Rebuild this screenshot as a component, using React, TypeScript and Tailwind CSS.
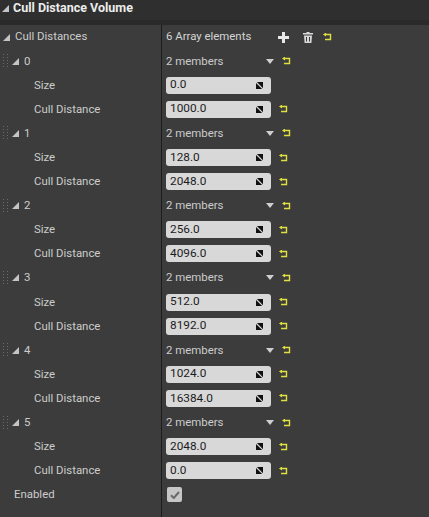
import React from 'react';

const elements = [
  { size: '0.0', dist: '1000.0', sizeReset: false, distReset: true },
  { size: '128.0', dist: '2048.0', sizeReset: true, distReset: true },
  { size: '256.0', dist: '4096.0', sizeReset: true, distReset: true },
  { size: '512.0', dist: '8192.0', sizeReset: true, distReset: true },
  { size: '1024.0', dist: '16384.0', sizeReset: true, distReset: true },
  { size: '2048.0', dist: '0.0', sizeReset: true, distReset: true },
];

function Expander() {
  return (
    <svg width="7" height="7" viewBox="0 0 7 7" className="shrink-0">
      <polygon points="7,0 7,7 0,7" fill="#c4c4c4" />
    </svg>
  );
}

function Grip() {
  return (
    <svg width="6" height="16" viewBox="0 0 6 16" className="shrink-0">
      {[1, 4, 7, 10, 13].map((y) => (
        <g key={y}>
          <rect x="0" y={y} width="1" height="1" fill="#6a6a6a" />
          <rect x="4" y={y} width="1" height="1" fill="#6a6a6a" />
        </g>
      ))}
    </svg>
  );
}

function ResetArrow() {
  return (
    <svg width="9" height="8" viewBox="0 0 9 8" className="shrink-0">
      <path d="M2.5 1.5 H7.5 V6.5 H2" stroke="#e0e040" strokeWidth="1.4" fill="none" />
      <polygon points="0,1.5 3,-0.5 3,3.5" fill="#e0e040" />
    </svg>
  );
}

function SpinIcon() {
  return (
    <svg width="7" height="7" viewBox="0 0 8 8" className="shrink-0">
      <polygon points="1,0 8,0 8,7" fill="#111" />
      <polygon points="0,1 0,8 7,8" fill="#111" />
    </svg>
  );
}

function NumberBox({ value }: { value: string }) {
  return (
    <div className="flex items-center justify-between w-[105px] h-[17px] rounded-[3px] bg-[#d8d8d8] pl-[4px] pr-[8px]">
      <span className="text-[11.8px] text-[#1c1c1c] leading-none">{value}</span>
      <SpinIcon />
    </div>
  );
}

function Row({ left, right }: { left: React.ReactNode; right: React.ReactNode }) {
  return (
    <div className="flex h-[24.1px]">
      <div className="w-[162px] shrink-0 border-r border-[#1c1c1c] flex items-center">{left}</div>
      <div className="flex-1 flex items-center pl-[4px]">{right}</div>
    </div>
  );
}

export default function App() {
  return (
    <div
      className="w-[429px] h-[517px] flex flex-col bg-[#3c3c3c] text-[#cccccc] text-[11.4px] overflow-hidden"
      style={{ fontFamily: 'Roboto, "Liberation Sans", sans-serif' }}
    >
      {/* Category header */}
      <div className="h-[25px] shrink-0 flex items-center gap-[4px] pl-[2px] pb-[4px] bg-[#2f2f2f] border-b-[5px] border-[#2a2a2a]">
        <Expander />
        <span className="text-[12.5px] font-bold text-[#ececec]">Cull Distance Volume</span>
      </div>

      <Row
        left={
          <div className="flex items-center gap-[5px] pl-[3px]">
            <Expander />
            <span>Cull Distances</span>
          </div>
        }
        right={
          <div className="flex items-center">
            <span className="text-[#d4d4d4]">6 Array elements</span>
            <svg width="11" height="11" viewBox="0 0 11 11" className="ml-[27px]">
              <rect x="4" y="0" width="3" height="11" fill="#e8e8e8" />
              <rect x="0" y="4" width="11" height="3" fill="#e8e8e8" />
            </svg>
            <svg width="10" height="11" viewBox="0 0 10 11" className="ml-[14px]">
              <rect x="0" y="1" width="10" height="1.5" fill="#d8d8d8" />
              <rect x="3.5" y="0" width="3" height="1.5" fill="#d8d8d8" />
              <path d="M1 3.5 H9 L8.4 11 H1.6 Z" fill="#d8d8d8" />
              <rect x="3" y="5" width="1" height="4.5" fill="#3c3c3c" />
              <rect x="6" y="5" width="1" height="4.5" fill="#3c3c3c" />
            </svg>
            <span className="ml-[10px] flex"><ResetArrow /></span>
          </div>
        }
      />

      {elements.map((el, i) => (
        <React.Fragment key={i}>
          <Row
            left={
              <div className="flex items-center pl-[3px]">
                <Grip />
                <span className="ml-[3px]"><Expander /></span>
                <span className="ml-[5px]">{i}</span>
              </div>
            }
            right={
              <div className="flex items-center">
                <span className="w-[100px]">2 members</span>
                <svg width="8" height="5" viewBox="0 0 8 5" className="shrink-0">
                  <polygon points="0,0 8,0 4,5" fill="#cfcfcf" />
                </svg>
                <span className="ml-[8px] flex"><ResetArrow /></span>
              </div>
            }
          />
          <Row
            left={<span className="pl-[34px]">Size</span>}
            right={
              <div className="flex items-center">
                <NumberBox value={el.size} />
                {el.sizeReset && <span className="ml-[8px] flex"><ResetArrow /></span>}
              </div>
            }
          />
          <Row
            left={<span className="pl-[34px]">Cull Distance</span>}
            right={
              <div className="flex items-center">
                <NumberBox value={el.dist} />
                {el.distReset && <span className="ml-[8px] flex"><ResetArrow /></span>}
              </div>
            }
          />
        </React.Fragment>
      ))}

      <Row
        left={<span className="pl-[14px]">Enabled</span>}
        right={
          <div className="w-[15px] h-[15px] ml-[1px] rounded-[2px] bg-[#c6c6c6] flex items-center justify-center">
            <svg width="10" height="8" viewBox="0 0 10 8">
              <path d="M1 4.2 L3.8 7 L9 1" stroke="#6a6a6a" strokeWidth="2" fill="none" />
            </svg>
          </div>
        }
      />

      <div className="flex-1 flex">
        <div className="w-[162px] shrink-0 border-r border-[#1c1c1c]" />
      </div>
    </div>
  );
}
